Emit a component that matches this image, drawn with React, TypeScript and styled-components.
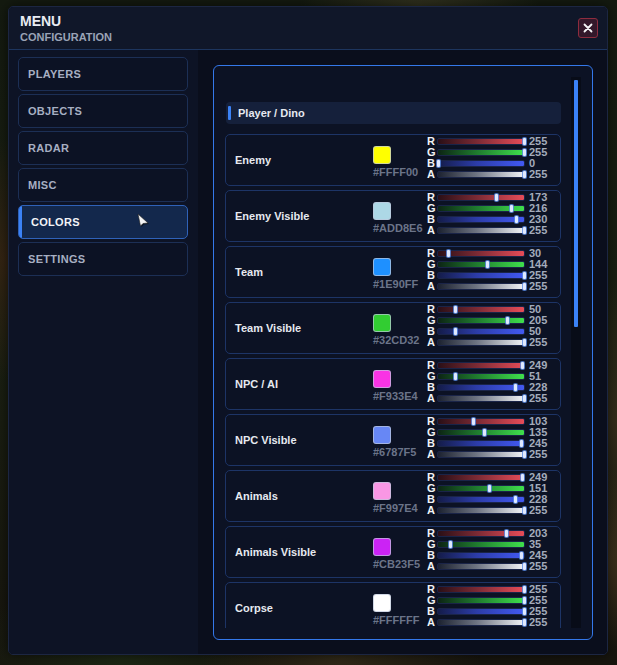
import React from 'react';
import styled, { createGlobalStyle } from 'styled-components';

const GlobalStyle = createGlobalStyle`
  html, body {
    margin: 0;
    padding: 0;
  }
  body {
    width: 617px;
    height: 665px;
    overflow: hidden;
    font-family: 'Liberation Sans', Arial, sans-serif;
    background:
      radial-gradient(ellipse 120px 90px at 600px 560px, rgba(92, 70, 40, 0.55), transparent),
      radial-gradient(ellipse 90px 140px at 612px 420px, rgba(70, 56, 34, 0.6), transparent),
      radial-gradient(ellipse 140px 60px at 340px 660px, rgba(60, 50, 28, 0.7), transparent),
      radial-gradient(ellipse 120px 40px at 420px 6px, rgba(70, 66, 40, 0.6), transparent),
      radial-gradient(ellipse 60px 120px at 4px 260px, rgba(70, 40, 20, 0.6), transparent),
      radial-gradient(ellipse 160px 80px at 120px 660px, rgba(30, 44, 22, 0.8), transparent),
      linear-gradient(180deg, #141a10 0%, #1a2012 50%, #17150e 100%);
  }
`;

const Page = styled.div`
  padding: 6px 10px 10px 8px;
  box-sizing: border-box;
  height: 665px;
`;

const Window = styled.div`
  width: 600px;
  height: 649px;
  display: flex;
  flex-direction: column;
  background: #0b1020;
  border: 1px solid #1c2642;
  border-radius: 5px;
  overflow: hidden;
  box-sizing: border-box;
  box-shadow: 0 0 12px rgba(0, 0, 0, 0.6);
`;

const Header = styled.div`
  height: 42px;
  flex-shrink: 0;
  display: flex;
  align-items: center;
  justify-content: space-between;
  padding: 0 9px 0 11px;
  background: #101729;
  border-bottom: 1px solid #1d355e;
`;

const TitleBlock = styled.div`
  display: flex;
  flex-direction: column;
  gap: 3px;
`;

const Title = styled.div`
  color: #e8ebf2;
  font-size: 14px;
  font-weight: 700;
  line-height: 14px;
`;

const Subtitle = styled.div`
  color: #9aa3b6;
  font-size: 11px;
  font-weight: 700;
  line-height: 12px;
`;

const CloseButton = styled.div`
  width: 18px;
  height: 18px;
  margin-top: -1px;
  display: flex;
  align-items: center;
  justify-content: center;
  background: #33182a;
  border: 1px solid #8e2c3e;
  border-radius: 3px;
`;

const Body = styled.div`
  flex: 1;
  display: grid;
  grid-template-columns: 189px 1fr;
  min-height: 0;
`;

const Sidebar = styled.div`
  background: #0d1325;
  padding: 7px 10px 0 9px;
  display: flex;
  flex-direction: column;
  gap: 3px;
`;

const NavItem = styled.div<{ $active?: boolean }>`
  position: relative;
  height: 34px;
  box-sizing: border-box;
  display: flex;
  align-items: center;
  padding-left: ${(p) => (p.$active ? '12px' : '9px')};
  border-radius: 5px;
  border: 1px solid ${(p) => (p.$active ? '#2f62b8' : '#1c2f55')};
  background: ${(p) => (p.$active ? '#13284c' : '#0c1224')};
  color: ${(p) => (p.$active ? '#f2f4f8' : '#a7afc2')};
  font-size: 11px;
  font-weight: 700;
  letter-spacing: 0.3px;
  overflow: hidden;

  &::before {
    content: '';
    display: ${(p) => (p.$active ? 'block' : 'none')};
    position: absolute;
    left: 0;
    top: 0;
    bottom: 0;
    width: 3px;
    background: #3b82f6;
  }
`;

const Cursor = styled.svg`
  position: absolute;
  left: 117px;
  top: 7px;
`;

const Content = styled.div`
  background: #0a0e1c;
  padding: 15px 14px 14px 15px;
  display: flex;
  min-height: 0;
`;

const Panel = styled.div`
  flex: 1;
  display: flex;
  gap: 10px;
  padding: 11px 10px 11px 11px;
  border: 1px solid #3478ea;
  border-radius: 6px;
  background: #0c1224;
  min-height: 0;
`;

const List = styled.div`
  width: 336px;
  display: flex;
  flex-direction: column;
  gap: 4px;
  padding-top: 25px;
  overflow: hidden;
`;

const SectionHeader = styled.div`
  height: 22px;
  flex-shrink: 0;
  margin: 0 0 6px 1px;
  display: flex;
  align-items: center;
  gap: 7px;
  padding-left: 2px;
  border-radius: 4px;
  background: #15203b;
  color: #e6e9f0;
  font-size: 11px;
  font-weight: 700;

  &::before {
    content: '';
    width: 3px;
    height: 14px;
    border-radius: 1px;
    background: #3b82f6;
  }
`;

const Row = styled.div`
  height: 52px;
  flex-shrink: 0;
  box-sizing: border-box;
  display: grid;
  grid-template-columns: 138px 54px 1fr;
  align-items: center;
  padding: 0 0 0 9px;
  border: 1px solid #1d3466;
  border-radius: 5px;
  background: #0c1224;
`;

const RowName = styled.div`
  color: #e6e9f0;
  font-size: 11px;
  font-weight: 700;
`;

const SwatchCol = styled.div`
  display: flex;
  flex-direction: column;
  gap: 3px;
  padding-top: 4px;
`;

const Swatch = styled.div<{ $color: string }>`
  width: 18px;
  height: 18px;
  box-sizing: border-box;
  border-radius: 3px;
  border: 1px solid rgba(190, 200, 220, 0.7);
  background: ${(p) => p.$color};
`;

const Hex = styled.div`
  color: #6b7489;
  font-size: 11px;
  font-weight: 700;
  line-height: 11px;
  white-space: nowrap;
`;

const Sliders = styled.div`
  display: flex;
  flex-direction: column;
  padding-bottom: 4px;
`;

const SliderLine = styled.div`
  height: 11px;
  display: grid;
  grid-template-columns: 10px 88px 1fr;
  align-items: center;
`;

const ChannelLabel = styled.span`
  color: #f0f2f6;
  font-size: 11px;
  font-weight: 700;
  line-height: 11px;
`;

const trackColors: Record<string, string> = {
  R: 'linear-gradient(90deg, #2a0f16 0%, #7a2a34 45%, #e74c58 100%)',
  G: 'linear-gradient(90deg, #0c2414 0%, #1f7a2e 45%, #3fe04c 100%)',
  B: 'linear-gradient(90deg, #141c4a 0%, #2c3ca8 45%, #4259f2 100%)',
  A: 'linear-gradient(90deg, #1c2230 0%, #6e7482 45%, #f2f4f7 100%)',
};

const Track = styled.div<{ $channel: string }>`
  position: relative;
  height: 7px;
  box-sizing: border-box;
  border: 1px solid #1a2448;
  border-radius: 2px;
  background: ${(p) => trackColors[p.$channel]};
`;

const Thumb = styled.div`
  position: absolute;
  top: -1px;
  width: 3px;
  height: 7px;
  margin-left: -1px;
  border-radius: 1px;
  background: #dfe9ff;
  box-shadow: 0 0 0 1px rgba(90, 140, 230, 0.8);
`;

const Value = styled.span`
  padding-left: 4px;
  color: #a3abbb;
  font-size: 11px;
  font-weight: 700;
  line-height: 11px;
`;

const ScrollTrack = styled.div`
  width: 10px;
  flex-shrink: 0;
  background: #080c18;
  padding-top: 3px;
  display: flex;
  justify-content: center;
`;

const ScrollThumb = styled.div`
  width: 4px;
  height: 247px;
  border-radius: 1px;
  background: #3b82f6;
`;

type ColorEntry = { name: string; hex: string; rgba: [number, number, number, number] };

const colors: ColorEntry[] = [
  { name: 'Enemy', hex: '#FFFF00', rgba: [255, 255, 0, 255] },
  { name: 'Enemy Visible', hex: '#ADD8E6', rgba: [173, 216, 230, 255] },
  { name: 'Team', hex: '#1E90FF', rgba: [30, 144, 255, 255] },
  { name: 'Team Visible', hex: '#32CD32', rgba: [50, 205, 50, 255] },
  { name: 'NPC / AI', hex: '#F933E4', rgba: [249, 51, 228, 255] },
  { name: 'NPC Visible', hex: '#6787F5', rgba: [103, 135, 245, 255] },
  { name: 'Animals', hex: '#F997E4', rgba: [249, 151, 228, 255] },
  { name: 'Animals Visible', hex: '#CB23F5', rgba: [203, 35, 245, 255] },
  { name: 'Corpse', hex: '#FFFFFF', rgba: [255, 255, 255, 255] },
];

const navItems = ['PLAYERS', 'OBJECTS', 'RADAR', 'MISC', 'COLORS', 'SETTINGS'];
const channels = ['R', 'G', 'B', 'A'];

const ColorRow = ({ entry }: { entry: ColorEntry }) => (
  <Row>
    <RowName>{entry.name}</RowName>
    <SwatchCol>
      <Swatch $color={entry.hex} />
      <Hex>{entry.hex}</Hex>
    </SwatchCol>
    <Sliders>
      {channels.map((ch, i) => (
        <SliderLine key={ch}>
          <ChannelLabel>{ch}</ChannelLabel>
          <Track $channel={ch}>
            <Thumb style={{ left: `${(entry.rgba[i] / 255) * 86}px` }} />
          </Track>
          <Value>{entry.rgba[i]}</Value>
        </SliderLine>
      ))}
    </Sliders>
  </Row>
);

export default function App() {
  return (
    <>
      <GlobalStyle />
      <Page>
        <Window>
          <Header>
            <TitleBlock>
              <Title>MENU</Title>
              <Subtitle>CONFIGURATION</Subtitle>
            </TitleBlock>
            <CloseButton>
              <svg width="10" height="10" viewBox="0 0 10 10">
                <path d="M1.5 1.5 L8.5 8.5 M8.5 1.5 L1.5 8.5" stroke="#f4f4f6" strokeWidth="1.8" strokeLinecap="round" />
              </svg>
            </CloseButton>
          </Header>
          <Body>
            <Sidebar>
              {navItems.map((item) => (
                <NavItem key={item} $active={item === 'COLORS'}>
                  {item}
                  {item === 'COLORS' && (
                    <Cursor width="14" height="14" viewBox="0 0 14 14">
                      <path d="M2 1 L12 10 L7 10.5 L4.5 13 Z" fill="#000" opacity="0.55" transform="translate(1 1)" />
                      <path d="M2 1 L12 10 L7 10.5 L4.5 13 Z" fill="#f4f4f4" stroke="#222" strokeWidth="0.6" />
                    </Cursor>
                  )}
                </NavItem>
              ))}
            </Sidebar>
            <Content>
              <Panel>
                <List>
                  <SectionHeader>Player / Dino</SectionHeader>
                  {colors.map((c) => (
                    <ColorRow key={c.name} entry={c} />
                  ))}
                </List>
                <ScrollTrack>
                  <ScrollThumb />
                </ScrollTrack>
              </Panel>
            </Content>
          </Body>
        </Window>
      </Page>
    </>
  );
}
